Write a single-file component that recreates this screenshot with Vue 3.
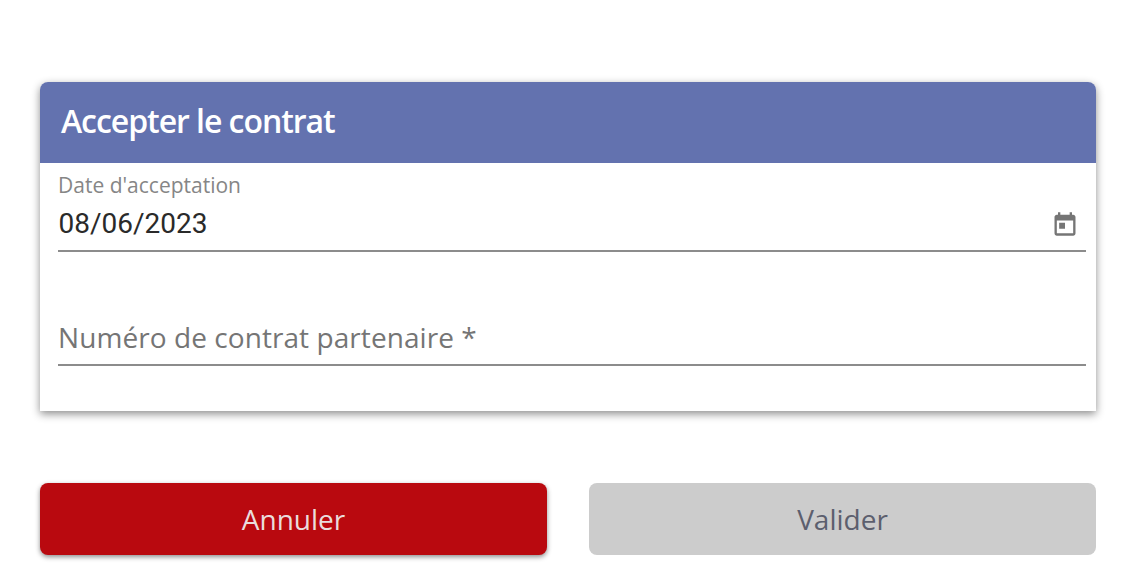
<script setup>
const title = 'Accepter le contrat'
const date = '08/06/2023'
</script>

<template>
  <div class="page">
    <section class="card">
      <header class="card-header">
        <h1>{{ title }}</h1>
      </header>
      <div class="card-body">
        <div class="field field-date">
          <label>Date d'acceptation</label>
          <div class="field-row">
            <span class="field-value">{{ date }}</span>
            <svg class="cal-icon" viewBox="0 0 24 24" width="28" height="28">
              <path fill="#757575" d="M19 4h-1V2h-2v2H8V2H6v2H5c-1.1 0-2 .9-2 2v14c0 1.1.9 2 2 2h14c1.1 0 2-.9 2-2V6c0-1.100-.9-2-2-2zm0 16H5V9h14v11zM7 11h5v5H7z" />
            </svg>
          </div>
        </div>
        <div class="field field-number">
          <span class="placeholder">Numéro de contrat partenaire *</span>
        </div>
      </div>
    </section>
    <div class="actions">
      <button class="btn btn-cancel">Annuler</button>
      <button class="btn btn-submit" disabled>Valider</button>
    </div>
  </div>
</template>

<style>
html, body {
  margin: 0;
  background: #fff;
}
</style>

<style scoped>
.page {
  width: 1137px;
  height: 584px;
  box-sizing: border-box;
  padding: 82px 41px 0 40px;
  font-family: "Open Sans", sans-serif;
  overflow: hidden;
}

.card {
  height: 329px;
  background: #fff;
  border-radius: 8px 8px 0 0;
  box-shadow: 0 3px 8px rgba(0, 0, 0, 0.45);
  overflow: hidden;
}

.card-header {
  height: 81px;
  background: #6372af;
  display: flex;
  align-items: center;
  padding: 0 0 4px 21px;
  box-sizing: border-box;
}

.card-header h1 {
  margin: 0;
  color: #fff;
  font-size: 32px;
  font-weight: 600;
  letter-spacing: -1.05px;
}

.card-body {
  padding: 0 10px 0 18px;
}

.field {
  border-bottom: 2px solid #8c8c8c;
}

.field-date {
  height: 89px;
  box-sizing: border-box;
  padding-top: 9px;
}

.field-date label {
  display: block;
  font-size: 21px;
  line-height: 26px;
  color: #868686;
}

.field-row {
  display: flex;
  justify-content: space-between;
  align-items: center;
  margin-top: 7px;
  padding-right: 7px;
  height: 36px;
}

.field-value {
  font-family: Roboto, sans-serif;
  font-size: 28px;
  margin-left: 0.5px;
  color: #2a2a2a;
}

.cal-icon {
  margin-top: 2px;
}

.field-number {
  margin-top: 60px;
  height: 54px;
  box-sizing: border-box;
  padding-top: 7px;
}

.placeholder {
  font-size: 28px;
  line-height: 36px;
  letter-spacing: 0.07px;
  color: #757575;
}

.actions {
  margin-top: 72px;
  display: grid;
  grid-template-columns: 507px 507px;
  justify-content: space-between;
}

.btn {
  height: 72px;
  border: none;
  border-radius: 8px;
  font-family: "Open Sans", sans-serif;
  font-size: 28px;
}

.btn-cancel {
  background: #b9090f;
  color: #eadcdc;
  box-shadow: 0 2px 5px rgba(0, 0, 0, 0.45);
}

.btn-submit {
  background: #cccccc;
  color: #5c5f6e;
}
</style>
